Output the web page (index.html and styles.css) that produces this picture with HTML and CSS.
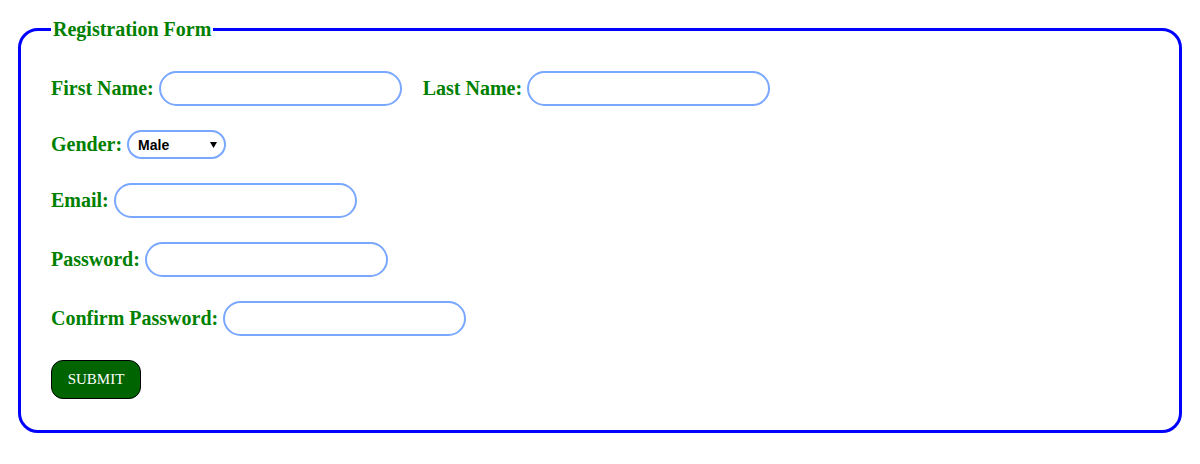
FILE: index.html
```html
<!DOCTYPE html>
<html>
<head>
<meta charset="utf-8">
<link rel="stylesheet" href="styles.css">
</head>
<body>
<form class="reg-form">
  <fieldset class="frame">
    <legend class="title">Registration Form</legend>
    <div class="rows">
      <div class="row">
        <label class="lbl">First Name:</label>
        <input class="field" type="text">
        <label class="lbl lbl-gap">Last Name:</label>
        <input class="field" type="text">
      </div>
      <div class="row">
        <label class="lbl">Gender:</label>
        <span class="select-wrap">
          <select class="choice">
            <option>Male</option>
            <option>Female</option>
          </select>
          <svg class="caret" width="7" height="6" viewBox="0 0 7 6"><path d="M0 0 H7 L3.5 6 Z" fill="#000"/></svg>
        </span>
      </div>
      <div class="row">
        <label class="lbl">Email:</label>
        <input class="field" type="email">
      </div>
      <div class="row">
        <label class="lbl">Password:</label>
        <input class="field" type="password">
      </div>
      <div class="row">
        <label class="lbl">Confirm Password:</label>
        <input class="field" type="password">
      </div>
      <div class="row">
        <button class="submit" type="button">SUBMIT</button>
      </div>
    </div>
  </fieldset>
</form>
</body>
</html>
```

FILE: styles.css
```css
body {
  margin: 8px;
  background: #ffffff;
  font-family: "Liberation Serif", "Times New Roman", serif;
}

.frame {
  margin: 10px;
  padding: 0 30px 31px 30px;
  border: 3px solid #0000ff;
  border-radius: 20px;
}

.title {
  padding: 0 2px;
  color: #008000;
  font-weight: bold;
  font-size: 20px;
}

.rows {
  display: flex;
  flex-direction: column;
  gap: 24px;
  padding-top: 30px;
}

.row {
  display: flex;
  align-items: center;
}

.lbl {
  color: #008000;
  font-weight: bold;
  font-size: 20px;
  margin-right: 5px;
}

.lbl-gap {
  margin-left: 21px;
}

.field {
  box-sizing: border-box;
  width: 243px;
  height: 35px;
  border: 2px solid #7aa7ff;
  border-radius: 18px;
  outline: none;
  padding: 0 10px;
  background: #fff;
}

.select-wrap {
  position: relative;
  display: inline-flex;
}

.choice {
  box-sizing: border-box;
  width: 99px;
  height: 29px;
  border: 2px solid #7aa7ff;
  border-radius: 15px;
  background: #fff;
  font-family: "Liberation Sans", Arial, sans-serif;
  font-weight: bold;
  font-size: 14px;
  color: #000;
  padding: 0 20px 0 9px;
  appearance: none;
  -webkit-appearance: none;
}

.caret {
  position: absolute;
  right: 9px;
  top: 12px;
  pointer-events: none;
}

.submit {
  box-sizing: border-box;
  width: 90px;
  height: 39px;
  background: #006400;
  color: #ffffff;
  border: 1px solid #000;
  border-radius: 12px;
  font-family: "Liberation Serif", "Times New Roman", serif;
  font-size: 15px;
  cursor: pointer;
}
```
